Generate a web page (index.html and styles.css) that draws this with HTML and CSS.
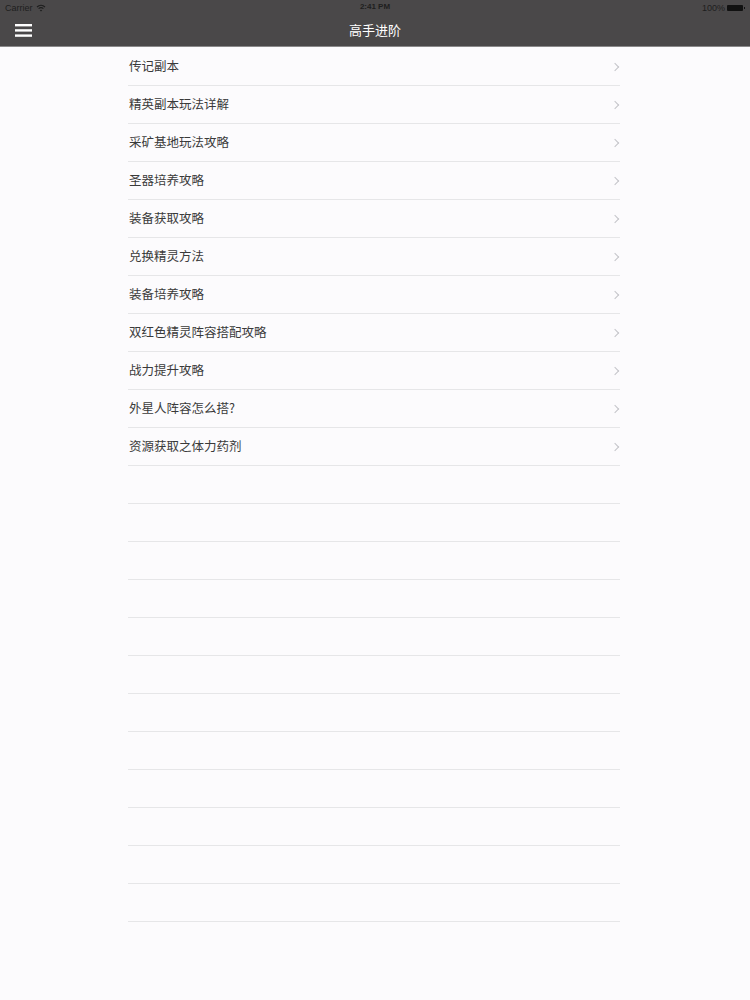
FILE: index.html
```html
<!DOCTYPE html>
<html>
<head>
<meta charset="utf-8">
<link rel="stylesheet" href="styles.css">
</head>
<body>
<div class="header">
  <div class="status">
    <div class="status-left">Carrier
      <svg class="wifi" width="10" height="8" viewBox="0 0 10 8"><path d="M1 3 A6 6 0 0 1 9 3" fill="none" stroke="#1e1e1e" stroke-width="1.2"/><path d="M2.6 4.6 A3.8 3.8 0 0 1 7.4 4.6" fill="none" stroke="#1e1e1e" stroke-width="1.2"/><path d="M5 7.6 L3.8 6.2 A1.8 1.8 0 0 1 6.2 6.2 Z" fill="#1e1e1e"/></svg>
    </div>
    <div class="status-center">2:41 PM</div>
    <div class="status-right">100% <span class="battery"><span class="battery-tip"></span></span></div>
  </div>
  <div class="navbar">
    <svg class="menu" width="17" height="13" viewBox="0 0 17 13"><rect x="0" y="0" width="17" height="2.4" fill="#fff"/><rect x="0" y="5.2" width="17" height="2.4" fill="#fff"/><rect x="0" y="10.4" width="17" height="2.4" fill="#fff"/></svg>
    <div class="title">高手进阶</div>
  </div>
</div>
<div class="list">
  <div class="row"><span class="label">传记副本</span><span class="chev"></span></div>
  <div class="row"><span class="label">精英副本玩法详解</span><span class="chev"></span></div>
  <div class="row"><span class="label">采矿基地玩法攻略</span><span class="chev"></span></div>
  <div class="row"><span class="label">圣器培养攻略</span><span class="chev"></span></div>
  <div class="row"><span class="label">装备获取攻略</span><span class="chev"></span></div>
  <div class="row"><span class="label">兑换精灵方法</span><span class="chev"></span></div>
  <div class="row"><span class="label">装备培养攻略</span><span class="chev"></span></div>
  <div class="row"><span class="label">双红色精灵阵容搭配攻略</span><span class="chev"></span></div>
  <div class="row"><span class="label">战力提升攻略</span><span class="chev"></span></div>
  <div class="row"><span class="label">外星人阵容怎么搭?</span><span class="chev"></span></div>
  <div class="row"><span class="label">资源获取之体力药剂</span><span class="chev"></span></div>
  <div class="row empty"></div>
  <div class="row empty"></div>
  <div class="row empty"></div>
  <div class="row empty"></div>
  <div class="row empty"></div>
  <div class="row empty"></div>
  <div class="row empty"></div>
  <div class="row empty"></div>
  <div class="row empty"></div>
  <div class="row empty"></div>
  <div class="row empty"></div>
  <div class="row empty"></div>
</div>
</body>
</html>
```
FILE: styles.css
```css
html, body {
  margin: 0;
  padding: 0;
  background: #fcfbfd;
  font-family: "Noto Sans CJK SC", "Liberation Sans", sans-serif;
}
.header {
  background: #4a4849;
  height: 46px;
  border-bottom: 1px solid #8a898a;
}
.status {
  height: 15px;
  display: flex;
  align-items: center;
  justify-content: space-between;
  padding: 0 5px 0 5px;
  font-family: "Liberation Sans", sans-serif;
  font-size: 9px;
  color: #1e1e1e;
  position: relative;
}
.status-left {
  display: flex;
  align-items: center;
  gap: 3px;
}
.status-center {
  position: absolute;
  left: 0;
  right: 0;
  text-align: center;
  top: 2px;
  font-size: 8px;
  font-weight: bold;
}
.status-right {
  display: flex;
  align-items: center;
  gap: 2px;
}
.battery {
  display: inline-block;
  width: 16px;
  height: 6px;
  background: #111;
  border-radius: 1px;
  position: relative;
  margin-right: 2px;
}
.battery-tip {
  position: absolute;
  right: -2px;
  top: 2px;
  width: 1.5px;
  height: 2px;
  background: #111;
}
.navbar {
  height: 31px;
  position: relative;
  display: flex;
  align-items: center;
  padding-left: 15px;
}
.menu {
  display: block;
  margin-top: -1px;
}
.title {
  position: absolute;
  left: 0;
  right: 0;
  text-align: center;
  color: #fff;
  font-size: 13px;
  top: 5px;
}
.list {
  width: 492px;
  margin-left: 128px;
  padding-top: 1px;
}
.row {
  height: 37px;
  border-bottom: 1px solid #e6e6e8;
  display: flex;
  align-items: center;
  justify-content: space-between;
}
.label {
  font-size: 12.5px;
  color: #3a3a3a;
  padding-left: 1px;
  padding-bottom: 2px;
}
.chev {
  width: 5px;
  height: 5px;
  border-right: 1.3px solid #c4c4c8;
  border-top: 1.3px solid #c4c4c8;
  transform: rotate(45deg);
  margin-right: 2px;
}
```
